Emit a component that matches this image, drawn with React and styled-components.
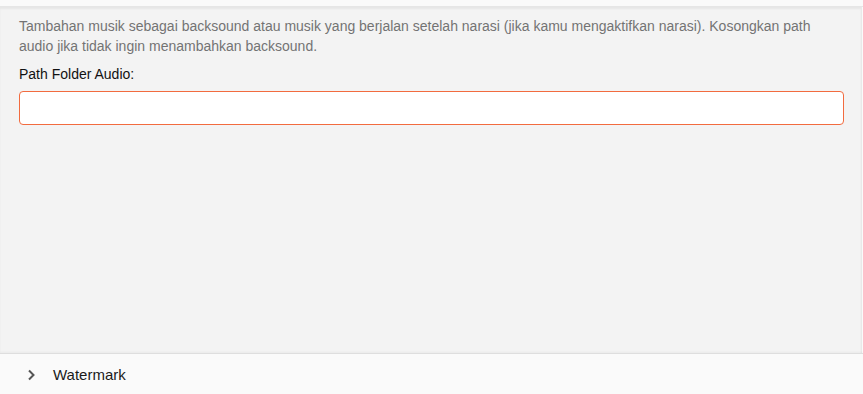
import styled, { createGlobalStyle } from "styled-components";

const GlobalStyle = createGlobalStyle`
  html, body {
    margin: 0;
    padding: 0;
    background: #fafafa;
    font-family: "Liberation Sans", Arial, sans-serif;
  }
`;

const Page = styled.div`
  width: 863px;
  height: 394px;
  display: flex;
  flex-direction: column;
  overflow: hidden;
  background: #fafafa;
`;

const PrevItem = styled.div`
  height: 6px;
  background: #fafafa;
  border-bottom: 1px solid #e6e6e6;
`;

const Panel = styled.div`
  height: 346px;
  box-sizing: border-box;
  background: #f3f3f3;
  padding: 9px 17px 0 19px;
  margin-right: 1px;
  border-right: 1px solid #e9e9e9;
  box-shadow: inset 0 2px 2px rgba(0, 0, 0, 0.05);
`;

const Desc = styled.p`
  margin: 0 0 8px;
  font-size: 14px;
  line-height: 20px;
  color: #737373;
`;

const Label = styled.label`
  display: block;
  font-size: 14px;
  line-height: 20px;
  color: #111;
  margin-bottom: 7px;
`;

const Input = styled.input`
  display: block;
  width: 100%;
  height: 34px;
  box-sizing: border-box;
  border: 1px solid #f26b3f;
  border-radius: 4px;
  background: #fff;
  padding: 6px 10px;
  font-family: inherit;
  font-size: 14px;
  outline: none;
`;

const AccordionRow = styled.button`
  display: flex;
  align-items: center;
  gap: 17px;
  height: 40px;
  box-sizing: border-box;
  padding: 2px 0 0 27px;
  border: none;
  border-top: 1px solid #dedede;
  box-shadow: 0 -1px 2px rgba(0, 0, 0, 0.04);
  background: #fafafa;
  font-family: inherit;
  font-size: 15px;
  color: #1a1a1a;
  text-align: left;
  cursor: pointer;
`;

const Chevron = () => (
  <svg width="9" height="12" viewBox="0 0 9 12">
    <path
      d="M2 1.5 L6.5 6 L2 10.5"
      fill="none"
      stroke="#555"
      strokeWidth="2"
    />
  </svg>
);

export default function App() {
  return (
    <>
      <GlobalStyle />
      <Page>
        <PrevItem />
        <Panel>
          <Desc>
            Tambahan musik sebagai backsound atau musik yang berjalan setelah
            narasi (jika kamu mengaktifkan narasi). Kosongkan path audio jika
            tidak ingin menambahkan backsound.
          </Desc>
          <Label htmlFor="audio-path">Path Folder Audio:</Label>
          <Input id="audio-path" type="text" />
        </Panel>
        <AccordionRow>
          <Chevron />
          Watermark
        </AccordionRow>
      </Page>
    </>
  );
}
